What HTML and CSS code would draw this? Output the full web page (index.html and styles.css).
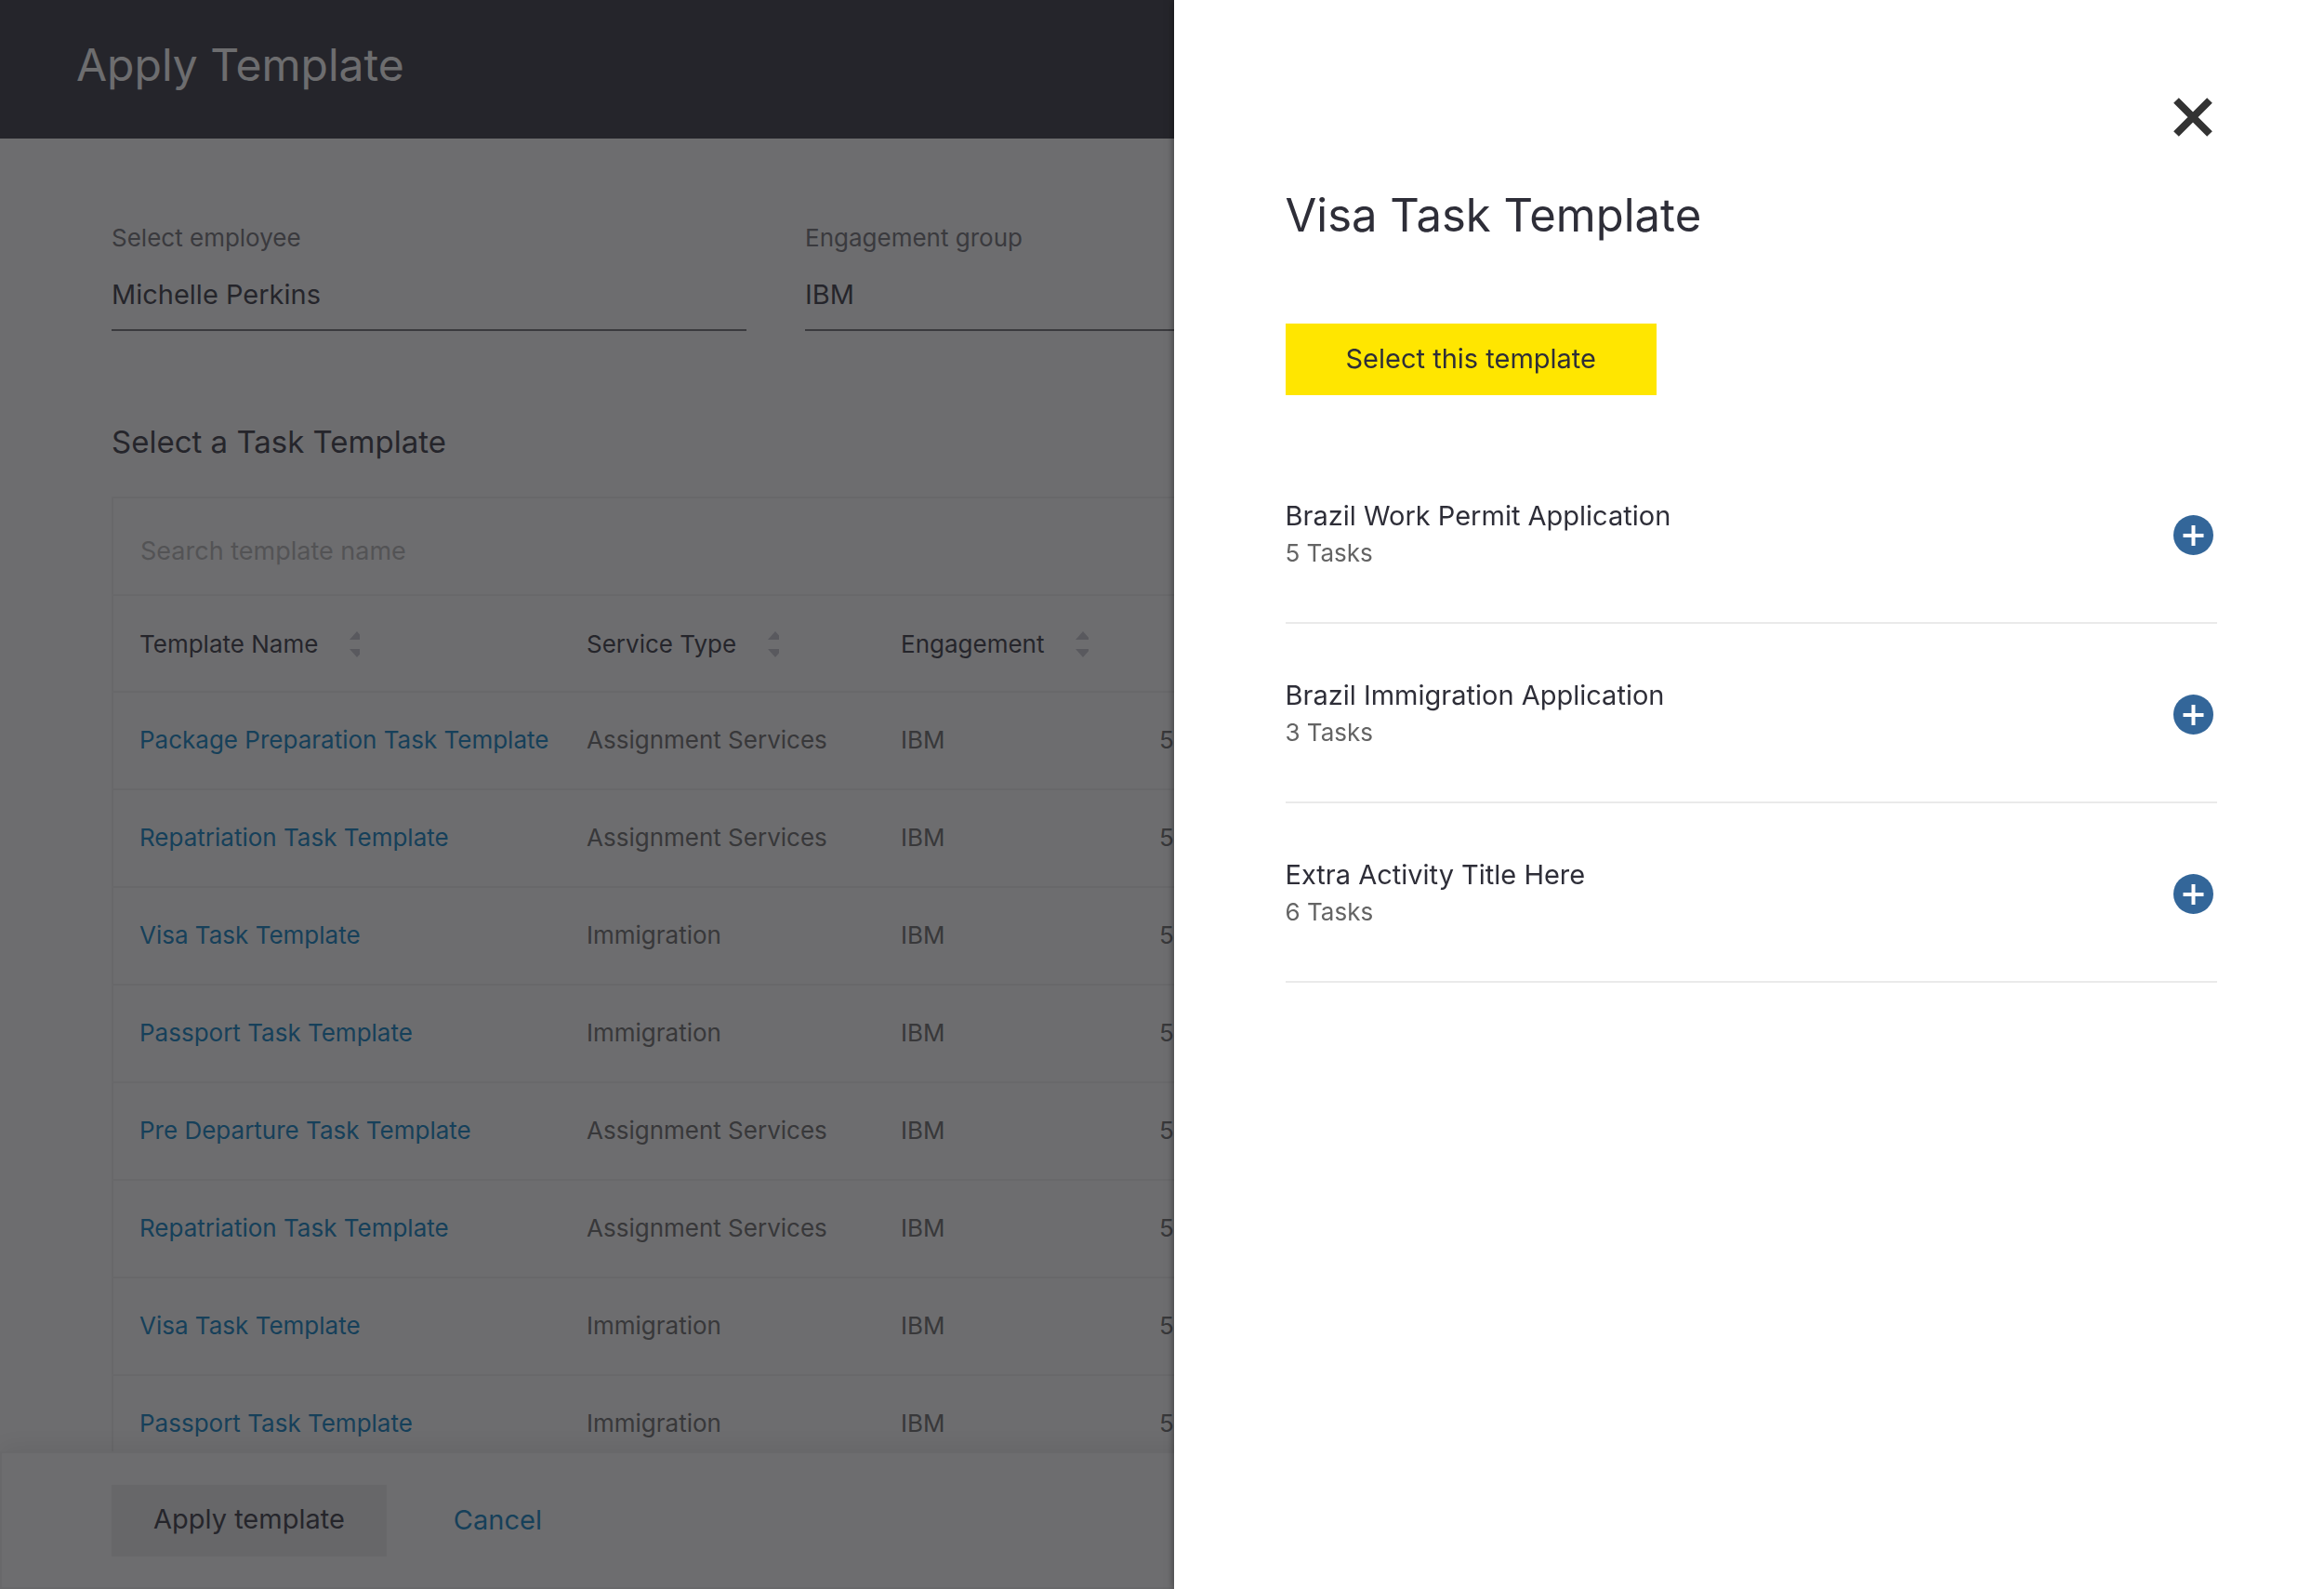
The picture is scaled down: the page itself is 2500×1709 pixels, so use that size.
FILE: index.html
```
<!DOCTYPE html>
<html lang="en">

<head>
  <meta charset="UTF-8">
  <meta name="viewport" content="width=device-width, initial-scale=1">
  <title>Apply Template</title>
  <link rel="stylesheet" href="styles.css">
</head>

<body>
  <header class="header">
    <h1>Apply Template</h1>
  </header>

  <main class="content">
    <form class="fields">
      <div class="field">
        <label for="employee">Select employee</label>
        <input type="text" id="employee" value="Michelle Perkins">
      </div>
      <div class="field">
        <label for="group">Engagement group</label>
        <input type="text" id="group" value="IBM">
      </div>
    </form>

    <h2>Select a Task Template</h2>
    <div class="card">
      <input type="search" class="search" placeholder="Search template name" aria-label="Search template name">
      <table class="templates">
        <colgroup>
          <col class="col-name">
          <col class="col-service">
          <col class="col-engagement">
          <col>
        </colgroup>
        <thead>
          <tr>
            <th>
              <button type="button" class="sort">Template Name
                <svg class="sort-icon" width="11" height="28" viewBox="0 0 11 28"><path d="M0 9L8 0L16 9zM0 19L8 28L16 19z"/></svg>
              </button>
            </th>
            <th>
              <button type="button" class="sort">Service Type
                <svg class="sort-icon" width="12" height="28" viewBox="0 0 12 28"><path d="M0 9L8 0L16 9zM0 19L8 28L16 19z"/></svg>
              </button>
            </th>
            <th>
              <button type="button" class="sort">Engagement
                <svg class="sort-icon" width="14" height="28" viewBox="0 0 14 28"><path d="M0 9L8 0L16 9zM0 19L8 28L16 19z"/></svg>
              </button>
            </th>
            <th></th>
          </tr>
        </thead>
        <tbody>
          <tr><td><a href="#">Package Preparation Task Template</a></td><td>Assignment Services</td><td>IBM</td><td>5</td></tr>
          <tr><td><a href="#">Repatriation Task Template</a></td><td>Assignment Services</td><td>IBM</td><td>5</td></tr>
          <tr><td><a href="#">Visa Task Template</a></td><td>Immigration</td><td>IBM</td><td>5</td></tr>
          <tr><td><a href="#">Passport Task Template</a></td><td>Immigration</td><td>IBM</td><td>5</td></tr>
          <tr><td><a href="#">Pre Departure Task Template</a></td><td>Assignment Services</td><td>IBM</td><td>5</td></tr>
          <tr><td><a href="#">Repatriation Task Template</a></td><td>Assignment Services</td><td>IBM</td><td>5</td></tr>
          <tr><td><a href="#">Visa Task Template</a></td><td>Immigration</td><td>IBM</td><td>5</td></tr>
          <tr><td><a href="#">Passport Task Template</a></td><td>Immigration</td><td>IBM</td><td>5</td></tr>
        </tbody>
      </table>
    </div>
  </main>

  <footer class="footer">
    <button type="button" class="btn btn-disabled">Apply template</button>
    <a href="#" class="cancel">Cancel</a>
  </footer>

  <div class="overlay"></div>

  <aside class="drawer" aria-labelledby="drawer-title">
    <button type="button" class="close" aria-label="Close">
      <svg width="42" height="42" viewBox="0 0 42 42"><path d="M3 3L39 39M39 3L3 39"/></svg>
    </button>
    <h2 id="drawer-title">Visa Task Template</h2>
    <button type="button" class="btn btn-primary">Select this template</button>

    <ul class="activities">
      <li>
        <div>
          <h3>Brazil Work Permit Application</h3>
          <p>5 Tasks</p>
        </div>
        <button type="button" class="expand" aria-label="Expand Brazil Work Permit Application">
          <svg width="43" height="43" viewBox="0 0 43 43"><circle cx="21.5" cy="21.5" r="21.5"/><path d="M21.5 11V33M10.5 22H32.5"/></svg>
        </button>
      </li>
      <li>
        <div>
          <h3>Brazil Immigration Application</h3>
          <p>3 Tasks</p>
        </div>
        <button type="button" class="expand" aria-label="Expand Brazil Immigration Application">
          <svg width="43" height="43" viewBox="0 0 43 43"><circle cx="21.5" cy="21.5" r="21.5"/><path d="M21.5 11V33M10.5 22H32.5"/></svg>
        </button>
      </li>
      <li>
        <div>
          <h3>Extra Activity Title Here</h3>
          <p>6 Tasks</p>
        </div>
        <button type="button" class="expand" aria-label="Expand Extra Activity Title Here">
          <svg width="43" height="43" viewBox="0 0 43 43"><circle cx="21.5" cy="21.5" r="21.5"/><path d="M21.5 11V33M10.5 22H32.5"/></svg>
        </button>
      </li>
    </ul>
  </aside>
</body>

</html>
```
FILE: styles.css
```
* {
  box-sizing: border-box;
}

body {
  display: flex;
  flex-direction: column;
  height: 100vh;
  margin: 0;
  overflow: hidden;
  background-color: #fff;
  color: #2e2e38;
  font-family: Inter, "Liberation Sans", sans-serif;
  font-size: 26px;
  line-height: 32px;
}

h1, h2, h3, p, ul {
  margin: 0;
  padding: 0;
  font-weight: 400;
}

button, input {
  padding: 0;
  border: 0;
  border-radius: 0;
  background: none;
  color: inherit;
  font: inherit;
}

button {
  cursor: pointer;
}

a {
  color: #007bc0;
  text-decoration: none;
}

svg {
  display: block;
}

.header {
  flex: none;
  padding: 40px 82px 49px;
  background-color: #2e2e38;
  color: #fff;
}

h1, .drawer h2 {
  font-size: 49px;
  line-height: 60px;
}

h1 {
  font-size: 48px;
}

.content {
  flex: 1;
  min-height: 0;
  padding: 91px 120px 0;
  overflow: hidden;
}

.fields {
  display: grid;
  grid-template-columns: repeat(2, 683px);
  gap: 63px;
}

.field label {
  display: block;
  color: #6a6a70;
}

.field input {
  width: 100%;
  height: 84px;
  padding-top: 6px;
  border-bottom: 2px solid #6a6a70;
  font-size: 29px;
}

.content h2 {
  margin-top: 99px;
  font-size: 33px;
  line-height: 40px;
}

.card {
  margin-top: 39px;
  border: 2px solid #f0f0f0;
}

.search {
  display: block;
  width: 100%;
  height: 105px;
  padding: 10px 29px 0;
  border-bottom: 2px solid #f0f0f0;
  font-size: 27px;
}

.search::placeholder {
  color: #b4b4b4;
  opacity: 1;
}

.templates {
  width: 100%;
  border-collapse: separate;
  border-spacing: 0;
  table-layout: fixed;
}

.col-name {
  width: 479px;
}

.col-service {
  width: 338px;
}

.col-engagement {
  width: 278px;
}

th, td {
  height: 105px;
  padding: 0 30px 2px;
  border-bottom: 2px solid #f0f0f0;
  color: #646464;
  font-weight: 400;
  text-align: left;
  white-space: nowrap;
}

th {
  height: 104px;
  padding: 2px 30px 0;
}

th:first-child, td:first-child {
  padding-left: 28px;
}

.sort {
  display: flex;
  align-items: center;
  gap: 34px;
  color: #2e2e38;
}

.sort-icon {
  fill: #c4c4cd;
}

.footer {
  display: flex;
  flex: none;
  align-items: center;
  gap: 72px;
  height: 148px;
  padding: 0 118px;
  border: 2px solid #f0f0f0;
  background-color: #fff;
  box-shadow: 0 -4px 24px rgba(0, 0, 0, 0.1);
}

.btn {
  height: 77px;
  font-size: 29px;
}

.btn-disabled {
  padding: 0 45px 2px;
  background-color: #ececec;
}

.btn-primary {
  padding: 0 65px 2px;
  background-color: #ffe600;
}

.cancel {
  font-size: 29px;
}

.overlay {
  position: fixed;
  inset: 0;
  background-color: rgba(33, 33, 37, 0.66);
}

.drawer {
  position: fixed;
  top: 0;
  right: 0;
  bottom: 0;
  width: 49.5%;
  padding: 105px 115px 0 120px;
  background-color: #fff;
  box-shadow: 0 0 8px rgba(0, 0, 0, 0.5);
}

.close {
  display: block;
  margin: 0 5px 0 auto;
}

.close path {
  fill: none;
  stroke: #333;
  stroke-width: 8;
}

.drawer h2 {
  margin: 55px 0 86px;
}

.activities {
  margin-top: 53px;
  list-style: none;
}

.activities li {
  display: flex;
  align-items: center;
  justify-content: space-between;
  height: 193px;
  padding: 3px 4px 0 0;
  border-bottom: 2px solid #eaeaea;
}

.activities h3 {
  font-size: 29px;
  line-height: 40px;
}

.activities p {
  line-height: 40px;
  color: #646464;
}

.expand circle {
  fill: #336699;
}

.expand path {
  stroke: #fff;
  stroke-width: 4;
}
```
